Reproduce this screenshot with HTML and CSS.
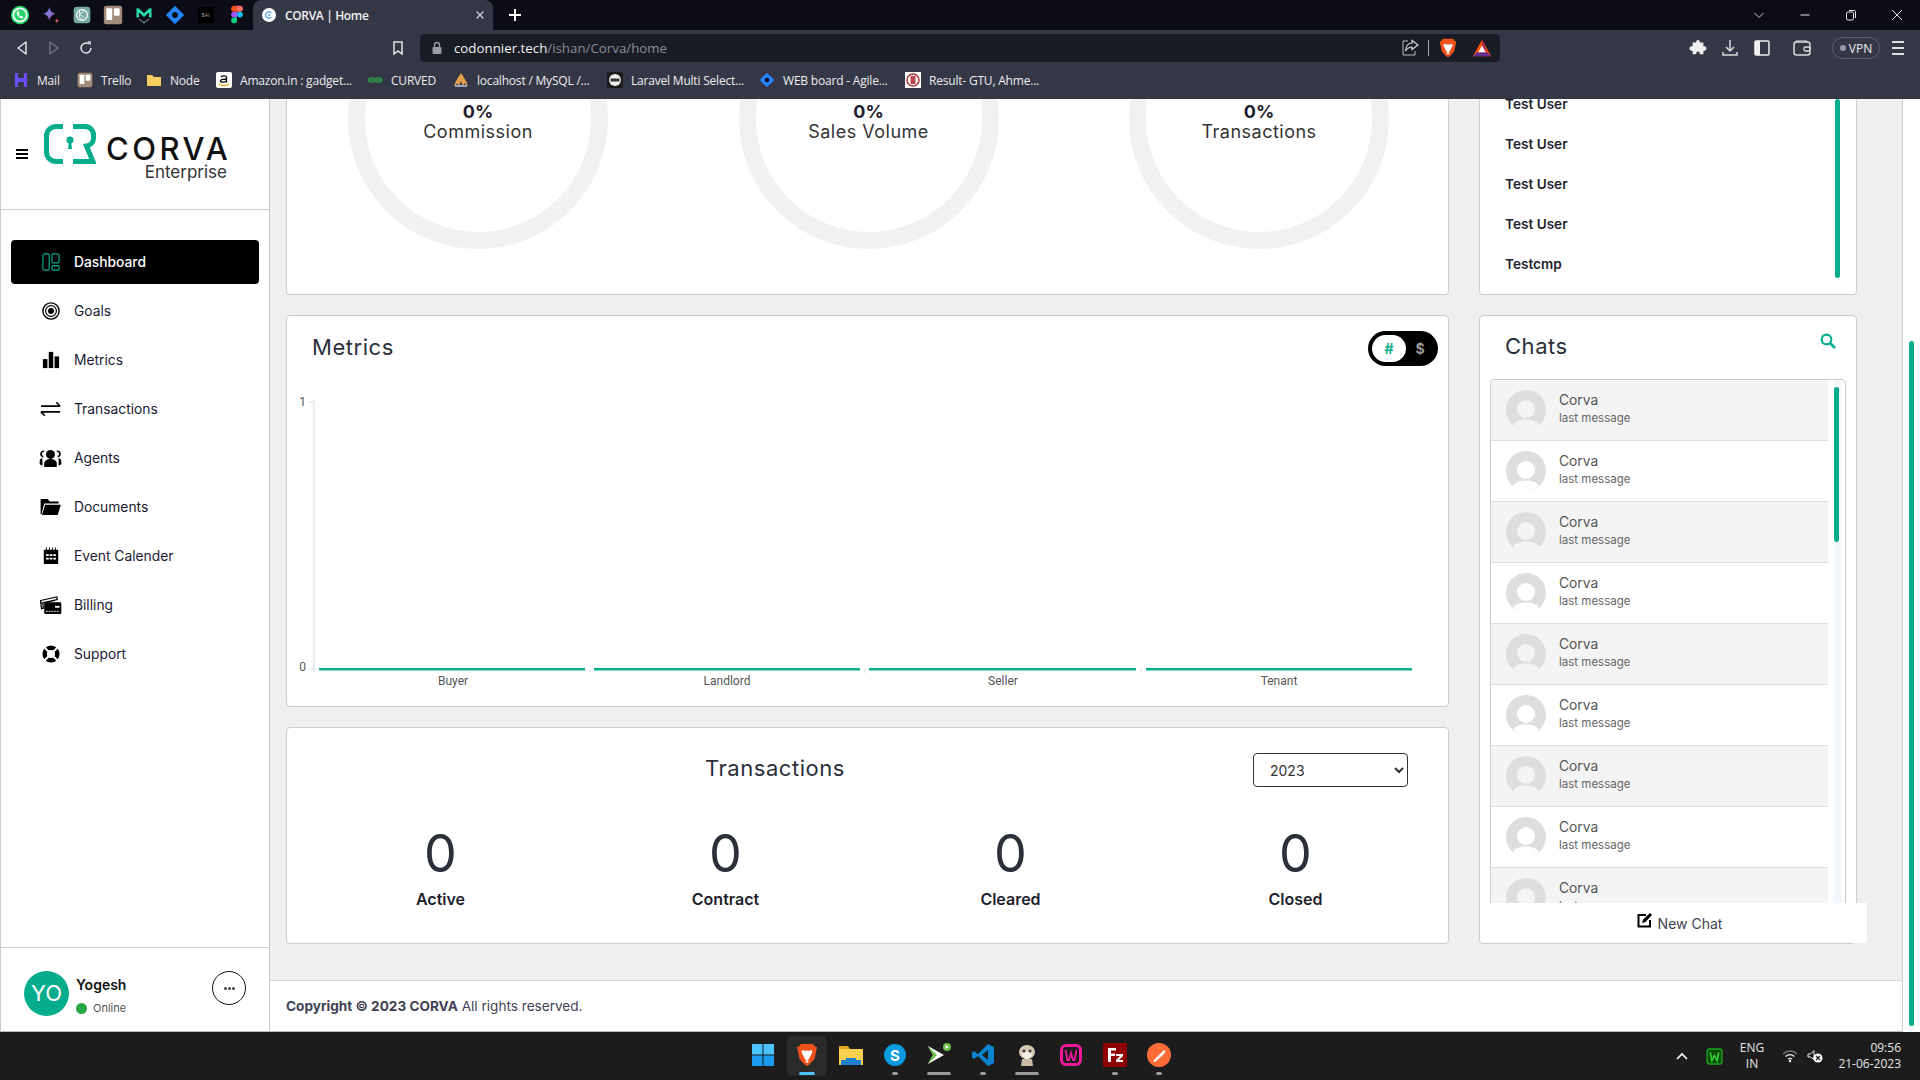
FILE: index.html
```html
<!DOCTYPE html>
<html>
<head>
	<meta charset="utf-8">
	<title>CORVA | Home</title>
	<link rel="stylesheet" href="styles.css">
</head>

<body>
	<svg class="defs" width="0" height="0">
		<symbol id="person" viewBox="0 0 40 40">
			<circle cx="20" cy="20" r="20" fill="#dedede"/>
			<circle cx="20" cy="19" r="9" fill="currentColor"/>
			<path d="M7 35c2-4 7-5.500 13-5.500s11 1.500 13 5.500c-3.500 3-8 5-13 5s-9.500-2-13-5z" fill="currentColor"/>
		</symbol>
		<symbol id="brave" viewBox="0 0 24 24">
			<path d="M6 1h12l2 2.500 2 .5-1 5-1.500 7-5 5.500L12 23l-2.500-1.500-5-5.500L3 9 2 4l2-.5z" fill="#f1511b"/>
			<path d="M7.500 7l3 1 1.500-.8 1.500.8 3-1 1 2-2.500 5-2 3.500h-2l-2-3.500-2.500-5z" fill="#fff"/>
			<path d="M9.800 18h4.400L12 20z" fill="#fff"/>
		</symbol>
		<symbol id="jira" viewBox="0 0 24 24">
			<path d="M12 1l11 11-11 11L1 12z" fill="#2684ff"/>
			<circle cx="12" cy="12" r="3.500" fill="#0b0c15"/>
		</symbol>
		<symbol id="trello" viewBox="0 0 24 24">
			<rect x="1" y="1" width="22" height="22" rx="3" fill="#a08a78"/>
			<rect x="4" y="4" width="7" height="14" rx="1" fill="#fff"/>
			<rect x="13" y="4" width="7" height="9" rx="1" fill="#fff"/>
		</symbol>
	</svg>

	<header class="browser">
		<div class="tabs">
			<span class="pin"><svg viewBox="0 0 24 24"><circle cx="12" cy="12" r="11" fill="#25d366"/><circle cx="12" cy="12" r="8" fill="none" stroke="#fff" stroke-width="2"/><path d="M9 7.500c-1.500 1-1.500 3 .5 5.500s4 3.500 5.500 3l1-1.500-2.200-1.500-1 .8c-1-.5-2-1.800-2.300-2.800l1-.8-1-2.700z" fill="#fff"/></svg></span>
			<span class="pin"><svg viewBox="0 0 24 24"><defs><linearGradient id="star" x1="0" y1="0" x2="1" y2="1"><stop offset="0" stop-color="#4b8cf5"/><stop offset="1" stop-color="#c65cb0"/></linearGradient></defs><path d="M10 2c.8 5 3 7.500 8 8.500-5 1-7.200 3.500-8 8.500-.8-5-3-7.500-8-8.500 5-1 7.200-3.500 8-8.500z" fill="url(#star)"/><path d="M19 16c.3 1.800 1 2.700 3 3-2 .3-2.700 1.200-3 3-.3-1.800-1-2.700-3-3 2-.3 2.700-1.200 3-3z" fill="#e0606f"/></svg></span>
			<span class="pin"><svg viewBox="0 0 24 24"><rect x="2" y="2" width="20" height="20" rx="4" fill="#74aa9c"/><circle cx="12" cy="12" r="6.500" fill="none" stroke="#fff" stroke-width="1.500"/><path d="M9 7v8l5 3M15 7l-6 4 6 4" fill="none" stroke="#fff"/></svg></span>
			<span class="pin"><svg viewBox="0 0 24 24"><use href="#trello"/></svg></span>
			<span class="pin"><svg viewBox="0 0 24 24"><path d="M3 15V4h2.500L12 10l6.500-6H21v11h-3V9l-6 5.500L6 9v6z" fill="#2bd9a5"/><path d="M6 17l6 4.500 6-4.500" fill="none" stroke="#59616f" stroke-width="2"/></svg></span>
			<span class="pin"><svg viewBox="0 0 24 24"><use href="#jira"/></svg></span>
			<span class="pin"><span class="bai">BAI</span></span>
			<span class="pin"><svg viewBox="0 0 24 24"><path d="M12 1H8.500a3.500 3.500 0 0 0 0 7H12z" fill="#f24e1e"/><path d="M12 1h3.500a3.500 3.500 0 0 1 0 7H12z" fill="#ff7262"/><path d="M12 8H8.500a3.500 3.500 0 0 0 0 7H12z" fill="#a259ff"/><circle cx="15.500" cy="11.500" r="3.500" fill="#1abcfe"/><path d="M8.500 15H12v3.500a3.500 3.500 0 1 1-3.500-3.500z" fill="#0acf83"/></svg></span>
			<div class="tab-active">
				<svg class="tab-icon" viewBox="0 0 24 24"><circle cx="12" cy="12" r="12" fill="#fff"/><path d="M16 8.500a5.500 5.500 0 1 0 0 7" fill="none" stroke="#6ba6e8" stroke-width="2.500"/><circle cx="12.500" cy="12" r="2" fill="#6ba6e8"/></svg>
				<span class="tab-title">CORVA | Home</span>
				<svg class="tab-close" viewBox="0 0 12 12"><path d="M2 2l8 8M10 2l-8 8" stroke="#e6e6e6" stroke-width="1.500"/></svg>
			</div>
			<svg class="tab-new" viewBox="0 0 14 14"><path d="M7 1v12M1 7h12" stroke="#fff" stroke-width="2"/></svg>
			<div class="window-btns">
				<span><svg viewBox="0 0 12 12"><path d="M1.500 4L6 8.500 10.500 4" fill="none" stroke="#c8c8c8"/></svg></span>
				<span><svg viewBox="0 0 12 12"><path d="M1.500 6h9" stroke="#e6e6e6"/></svg></span>
				<span><svg viewBox="0 0 12 12"><rect x="1.500" y="3" width="7" height="8" rx="1.500" fill="none" stroke="#e6e6e6"/><path d="M4 1.500h5.500a1 1 0 0 1 1 1V9" fill="none" stroke="#e6e6e6"/></svg></span>
				<span><svg viewBox="0 0 12 12"><path d="M1 1l10 10M11 1L1 11" stroke="#e6e6e6"/></svg></span>
			</div>
		</div>

		<div class="toolbar">
			<span class="nav-btn"><svg viewBox="0 0 16 16"><path d="M12 2L4 8l8 6z" fill="none" stroke="#e4e4e4" stroke-width="1.500" stroke-linejoin="round"/></svg></span>
			<span class="nav-btn"><svg viewBox="0 0 16 16"><path d="M4 2l8 6-8 6z" fill="none" stroke="#6d7180" stroke-width="1.500" stroke-linejoin="round"/></svg></span>
			<span class="nav-btn"><svg viewBox="0 0 16 16"><path d="M13 8a5 5 0 1 1-2-4" fill="none" stroke="#e4e4e4" stroke-width="1.500"/><path d="M9.500 1l3.500.5-.5 4z" fill="#e4e4e4"/></svg></span>
			<svg class="bookmark-btn" viewBox="0 0 16 16"><path d="M4 2h8v12l-4-3-4 3z" fill="none" stroke="#e4e4e4" stroke-width="1.500"/></svg>
			<div class="address">
				<svg class="lock" viewBox="0 0 14 14"><rect x="2.500" y="6" width="9" height="7" rx="1" fill="#9a9ca5"/><path d="M4.500 6V4a2.500 2.500 0 0 1 5 0v2" fill="none" stroke="#9a9ca5" stroke-width="1.300"/></svg>
				<span class="url">codonnier.tech<span class="url-path">/ishan/Corva/home</span></span>
				<div class="address-icons">
					<svg class="ai-share" viewBox="0 0 20 20"><path d="M8 3H3v14h12v-4" fill="none" stroke="#bbb"/><path d="M18 7l-6-4.500V5C8 5 6 8 5.500 13c2-3 4-4 6.500-4v2.500z" fill="none" stroke="#d8d8d8" stroke-width="1.200"/></svg>
					<span class="ai-sep"></span>
					<svg class="ai-icon" viewBox="0 0 24 24"><use href="#brave"/></svg>
					<svg class="ai-icon" viewBox="0 0 24 24"><path d="M12 2L1 22h22z" fill="#ff5000"/><path d="M1 22l5-5h12l5 5z" fill="#662d91"/><path d="M12 2v8l5 7 1 .5z" fill="#9e1f63"/><path d="M12 9l4.500 8h-9z" fill="#fff"/></svg>
				</div>
			</div>
			<svg class="tool tool-first" viewBox="0 0 20 20"><path d="M8 3a2 2 0 0 1 4 0v1h4v4h1a2 2 0 0 1 0 5h-1v4h-4v-1a2 2 0 0 0-4 0v1H4v-4H3a2 2 0 0 1 0-5h1V4h4z" fill="#f0f0f0" transform="translate(1 1) scale(.9)"/></svg>
			<svg class="tool" viewBox="0 0 20 20"><path d="M10 2v11M6 9l4 4 4-4" fill="none" stroke="#ddd" stroke-width="1.500"/><path d="M3 14v3h14v-3" fill="none" stroke="#ddd" stroke-width="1.500"/></svg>
			<svg class="tool" viewBox="0 0 20 20"><rect x="3" y="3" width="14" height="14" rx="1" fill="none" stroke="#f0f0f0" stroke-width="1.500"/><rect x="3" y="3" width="5" height="14" fill="#f0f0f0"/></svg>
			<svg class="tool tool-wide" viewBox="0 0 20 20"><rect x="2" y="4" width="16" height="13" rx="2.500" fill="none" stroke="#ddd" stroke-width="1.500"/><path d="M4 4V3h11v1" fill="none" stroke="#ddd"/><rect x="12" y="9" width="6" height="4" rx="1.500" fill="none" stroke="#ddd" stroke-width="1.300"/></svg>
			<span class="vpn"><i class="vpn-dot"></i>VPN</span>
			<svg class="tool tool-menu" viewBox="0 0 20 20"><path d="M4 4h12M4 10h12M4 16h12" stroke="#ddd" stroke-width="2"/></svg>
		</div>

		<div class="bookmarks">
			<span class="bm"><svg viewBox="0 0 16 16"><path d="M2 1h3v5h6V1h3v14h-3v-5H5v5H2z" fill="#6a4df5"/></svg>Mail</span>
			<span class="bm"><svg viewBox="0 0 24 24"><use href="#trello"/></svg>Trello</span>
			<span class="bm"><svg viewBox="0 0 16 16"><path d="M1 3h5l2 2h7v9H1z" fill="#f7cf5f"/></svg>Node</span>
			<span class="bm"><svg viewBox="0 0 16 16"><rect width="16" height="16" rx="2" fill="#fff"/><path d="M5 5c1-1.500 5-1.500 5.500 0v5.500M10.500 7C7 7 4.500 7.500 4.500 9s4 1.500 6 0" fill="none" stroke="#111" stroke-width="1.400"/><path d="M3 12c3 2 7 2 10 0" fill="none" stroke="#f90" stroke-width="1.300"/></svg>Amazon.in : gadget...</span>
			<span class="bm"><svg viewBox="0 0 16 16"><path d="M8 8c-1-3-6-3-7 0 1 3 6 3 7 0 1-3 6-3 7 0-1 3-6 3-7 0zM1 8h14" fill="none" stroke="#2f8d46" stroke-width="1.300"/></svg>CURVED</span>
			<span class="bm"><svg viewBox="0 0 16 16"><path d="M8 1c-2 3-5 7-7 13 2-1 3-2 4-3 0 1 0 2 1 3l2-5 2 5c1-1 1-2 1-3 1 1 2 2 4 3-2-6-5-10-7-13z" fill="#e9a04a"/><path d="M2 13h12v2H2z" fill="#9aa5c4"/></svg>localhost / MySQL /...</span>
			<span class="bm"><svg viewBox="0 0 16 16"><rect width="16" height="16" rx="2" fill="#1b1b1b"/><circle cx="8" cy="8" r="6" fill="#eee"/><rect x="3.500" y="6.500" width="9" height="3" fill="#333"/></svg>Laravel Multi Select...</span>
			<span class="bm"><svg viewBox="0 0 24 24"><use href="#jira"/></svg>WEB board - Agile...</span>
			<span class="bm"><svg viewBox="0 0 16 16"><rect width="16" height="16" fill="#fff"/><circle cx="8" cy="8" r="6" fill="none" stroke="#a33" stroke-width="1.500"/><rect x="5.500" y="4" width="5" height="8" fill="#b45"/></svg>Result- GTU, Ahme...</span>
		</div>
	</header>

	<div class="app">
		<aside class="sidebar">
			<div class="brand">
				<svg class="hamburger" viewBox="0 0 12 10"><path d="M0 1h12M0 5h12M0 9h12" stroke="#000" stroke-width="2"/></svg>
				<svg class="logo-mark" viewBox="0 0 52 40"><path d="M19 2.500h-7A9.500 9.500 0 0 0 2.500 12v16a9.500 9.500 0 0 0 9.500 9.500h7M29 2.500h12a8.500 8.500 0 0 1 8.500 8.500v3a8 8 0 0 1-7 8l6.500 15.500H29" fill="none" stroke="#06ad8c" stroke-width="5"/><circle cx="26" cy="16" r="3.500" fill="#06ad8c"/><path d="M25 17h2l1 8h-4z" fill="#06ad8c"/></svg>
				<div class="logo-text">
					<div class="logo-name">CORVA</div>
					<div class="logo-sub">Enterprise</div>
				</div>
			</div>

			<nav class="menu">
				<a class="menu-item active"><svg viewBox="0 0 20 20"><rect x="1" y="1" width="7" height="18" rx="1.500" fill="none" stroke="#06ad8c" stroke-width="1.300"/><rect x="11" y="1" width="8" height="10" rx="1.500" fill="none" stroke="#06ad8c" stroke-width="1.300"/><rect x="11" y="14" width="8" height="5" rx="1.500" fill="none" stroke="#06ad8c" stroke-width="1.300"/></svg>Dashboard</a>
				<a class="menu-item"><svg viewBox="0 0 20 20"><circle cx="10" cy="10" r="9" fill="none" stroke="#000" stroke-width="1.600"/><circle cx="10" cy="10" r="6" fill="none" stroke="#000" stroke-width="1.300"/><circle cx="10" cy="10" r="3.300" fill="#000"/></svg>Goals</a>
				<a class="menu-item"><svg viewBox="0 0 20 20"><rect x="1" y="9" width="5" height="10" fill="#000"/><rect x="7.500" y="1" width="5" height="18" fill="#000"/><rect x="14" y="6" width="5" height="13" fill="#000"/></svg>Metrics</a>
				<a class="menu-item"><svg class="wide" viewBox="0 0 24 16"><path d="M2 5h20M18 1l4 4M2 11h20M6 15l-4-4" fill="none" stroke="#000" stroke-width="1.700"/></svg>Transactions</a>
				<a class="menu-item"><svg class="wide" viewBox="0 0 24 20"><circle cx="12" cy="6" r="5" fill="#000"/><path d="M5 20v-4c0-3 3-5 7-5s7 2 7 5v4z" fill="#000"/><path d="M5 2.500a3 3 0 0 0-1 6M19 2.500a3 3 0 0 1 1 6" fill="none" stroke="#000" stroke-width="1.800"/><path d="M3 10c-2 .5-3 2-3 4v3l3 1.500zM21 10c2 .5 3 2 3 4v3l-3 1.500z" fill="#000"/></svg>Agents</a>
				<a class="menu-item"><svg class="wide" viewBox="0 0 24 20"><path d="M1 1h8l2 3h10v2H5L2 18H1z" fill="#000"/><path d="M6 7.500h17.500L20 19H2.500z" fill="#000"/></svg>Documents</a>
				<a class="menu-item"><svg viewBox="0 0 20 20"><rect x="2" y="3" width="16" height="16" rx="1" fill="#000"/><path d="M5 0.500v4M8.300 0.500v4M11.700 0.500v4M15 0.500v4" stroke="#000"/><path d="M4.500 8h3v2h-3zM8.500 8h3v2h-3zM12.500 8h3v2h-3zM4.500 12h3v2h-3zM8.500 12h3v2h-3zM12.500 12h3v2h-3z" fill="#fff"/></svg>Event Calender</a>
				<a class="menu-item"><svg class="wide" viewBox="0 0 24 20"><path d="M1 5l18-4 .5 3-16 3.500.5 6-2 .5zM2 8l15-3" fill="none" stroke="#000" stroke-width="1.400"/><rect x="5" y="7" width="19" height="13" rx="1.500" fill="#000"/><path d="M17 11h5v2h-5z" fill="#fff"/><path d="M7 17h14" stroke="#fff" stroke-dasharray="2 1"/></svg>Billing</a>
				<a class="menu-item"><svg viewBox="0 0 20 20"><circle cx="10" cy="10" r="9.500" fill="#000"/><path d="M3 3l14 14M17 3L3 17" stroke="#fff" stroke-width="2.200"/><circle cx="10" cy="10" r="4.500" fill="#fff"/></svg>Support</a>
			</nav>

			<div class="profile">
				<div class="profile-pic">YO</div>
				<div class="profile-info">
					<div class="profile-name">Yogesh</div>
					<div class="profile-status"><i class="status-dot"></i>Online</div>
				</div>
				<button class="profile-more"><i></i><i></i><i></i></button>
			</div>
		</aside>

		<main class="main">
			<div class="content">
				<section class="card gauges">
					<div class="gauge"><b>0%</b><span>Commission</span></div>
					<div class="gauge"><b>0%</b><span>Sales Volume</span></div>
					<div class="gauge"><b>0%</b><span>Transactions</span></div>
				</section>

				<section class="card users">
					<ul class="user-list">
						<li>Test User</li>
						<li>Test User</li>
						<li>Test User</li>
						<li>Test User</li>
						<li>Testcmp</li>
					</ul>
					<div class="user-thumb"></div>
				</section>

				<section class="card metrics">
					<div class="metrics-head">
						<h2 class="card-title">Metrics</h2>
						<div class="toggle">
							<span class="toggle-on">#</span>
							<span class="toggle-off">$</span>
						</div>
					</div>
					<svg class="chart" width="1161" height="300" viewBox="0 0 1161 300">
						<path d="M27 4v273M22 6h5M22 273h5M303 273v4M578 273v4M854 273v4" stroke="#ddd" fill="none"/>
						<g fill="#06ad8c">
							<rect x="32" y="272" width="266" height="2.500"/>
							<rect x="307" y="272" width="266" height="2.500"/>
							<rect x="582" y="272" width="267" height="2.500"/>
							<rect x="859" y="272" width="266" height="2.500"/>
						</g>
						<text x="19" y="10" class="tick" text-anchor="end">1</text>
						<text x="19" y="275" class="tick" text-anchor="end">0</text>
						<text x="166" y="289" class="tick" text-anchor="middle">Buyer</text>
						<text x="440" y="289" class="tick" text-anchor="middle">Landlord</text>
						<text x="716" y="289" class="tick" text-anchor="middle">Seller</text>
						<text x="992" y="289" class="tick" text-anchor="middle">Tenant</text>
					</svg>
				</section>

				<section class="card chats">
					<div class="chats-head">
						<h2 class="card-title">Chats</h2>
						<svg class="chats-search" viewBox="0 0 16 16"><circle cx="6.500" cy="6.500" r="4.800" fill="none" stroke="#06ad8c" stroke-width="2.200"/><path d="M10 10l5 5" stroke="#06ad8c" stroke-width="2.600"/></svg>
					</div>
					<div class="chat-box">
						<div class="chat-rows">
							<div class="chat-row"><svg class="chat-pic"><use href="#person"/></svg><div><div class="chat-name">Corva</div><div class="chat-msg">last message</div></div></div>
							<div class="chat-row"><svg class="chat-pic"><use href="#person"/></svg><div><div class="chat-name">Corva</div><div class="chat-msg">last message</div></div></div>
							<div class="chat-row"><svg class="chat-pic"><use href="#person"/></svg><div><div class="chat-name">Corva</div><div class="chat-msg">last message</div></div></div>
							<div class="chat-row"><svg class="chat-pic"><use href="#person"/></svg><div><div class="chat-name">Corva</div><div class="chat-msg">last message</div></div></div>
							<div class="chat-row"><svg class="chat-pic"><use href="#person"/></svg><div><div class="chat-name">Corva</div><div class="chat-msg">last message</div></div></div>
							<div class="chat-row"><svg class="chat-pic"><use href="#person"/></svg><div><div class="chat-name">Corva</div><div class="chat-msg">last message</div></div></div>
							<div class="chat-row"><svg class="chat-pic"><use href="#person"/></svg><div><div class="chat-name">Corva</div><div class="chat-msg">last message</div></div></div>
							<div class="chat-row"><svg class="chat-pic"><use href="#person"/></svg><div><div class="chat-name">Corva</div><div class="chat-msg">last message</div></div></div>
							<div class="chat-row"><svg class="chat-pic"><use href="#person"/></svg><div><div class="chat-name">Corva</div><div class="chat-msg">last message</div></div></div>
						</div>
						<div class="chat-track"><div class="chat-thumb"></div></div>
					</div>
					<div class="new-chat">
						<svg viewBox="0 0 16 16"><path d="M9 3H1.500v11.500H13V8" fill="none" stroke="#000" stroke-width="2"/><path d="M5 11l1-3.500L13 1l2 2-6.500 7z" fill="#000"/></svg>
						New Chat
					</div>
				</section>

				<section class="card transactions">
					<div class="tx-head">
						<h2 class="card-title tx-title">Transactions</h2>
						<select class="tx-year"><option>2023</option></select>
					</div>
					<div class="tx-stats">
						<div class="tx-stat"><div class="tx-num">0</div><div class="tx-label">Active</div></div>
						<div class="tx-stat"><div class="tx-num">0</div><div class="tx-label">Contract</div></div>
						<div class="tx-stat"><div class="tx-num">0</div><div class="tx-label">Cleared</div></div>
						<div class="tx-stat"><div class="tx-num">0</div><div class="tx-label">Closed</div></div>
					</div>
				</section>
			</div>

			<footer class="page-footer"><b>Copyright © 2023 CORVA</b> All rights reserved.</footer>
		</main>

		<div class="page-scroll"><div class="page-thumb"></div></div>
	</div>

	<footer class="taskbar">
		<div class="task-icons">
			<span class="task"><svg viewBox="0 0 24 24"><g fill="#4cc2ff"><rect x="1" y="1" width="10.500" height="10.500"/><rect x="12.500" y="1" width="10.500" height="10.500"/></g><g fill="#1a9bf0"><rect x="1" y="12.500" width="10.500" height="10.500"/><rect x="12.500" y="12.500" width="10.500" height="10.500"/></g></svg></span>
			<span class="task task-open"><svg viewBox="0 0 24 24"><use href="#brave"/></svg><i class="mark mark-blue"></i></span>
			<span class="task"><svg viewBox="0 0 24 24"><path d="M0 3h9l2 3H0z" fill="#e6a817"/><rect y="6" width="24" height="16" fill="#fbd04e"/><path d="M7 15h10v2h5v5H2v-5h5z" fill="#1f7fd1"/></svg></span>
			<span class="task"><svg viewBox="0 0 24 24"><circle cx="12" cy="12" r="11" fill="#0a9ae0"/><text x="12" y="17.500" class="task-s">S</text></svg><i class="mark"></i></span>
			<span class="task"><svg viewBox="0 0 24 24"><path d="M1 3l16 9-16 9 5-9z" fill="#fff"/><path d="M1 3l9 9H6z" fill="#6cc04a"/><path d="M1 21l9-9H6z" fill="#6cc04a"/><circle cx="20" cy="4" r="4" fill="#6cc04a"/><path d="M18.500 2l3.500 2-3.500 2z" fill="#fff"/></svg><i class="mark mark-long"></i></span>
			<span class="task"><svg viewBox="0 0 24 24"><path d="M17 1l6 3v16l-6 3L7 13l-4 3-2-1.500V9.500L3 8l4 3zM17 7l-6 5 6 5z" fill="#0a84d0"/></svg><i class="mark"></i></span>
			<span class="task"><svg viewBox="0 0 24 24"><ellipse cx="12" cy="9" rx="8" ry="7" fill="#d6c8b4"/><ellipse cx="12" cy="12" rx="5" ry="4" fill="#f3efe8"/><circle cx="9" cy="8" r="1.500" fill="#333"/><circle cx="15" cy="8" r="1.500" fill="#333"/><path d="M7 16h10l1 7H6z" fill="#cbbba5"/></svg><i class="mark mark-long"></i></span>
			<span class="task"><svg viewBox="0 0 24 24"><rect x="1" y="1" width="22" height="22" rx="6" fill="#f0189a"/><rect x="4" y="4" width="16" height="16" rx="3" fill="#1c1c1c"/><path d="M6.500 7l2 10h1.500L12 10l2 7h1.500l2-10" fill="none" stroke="#f0189a" stroke-width="1.800"/></svg></span>
			<span class="task"><svg viewBox="0 0 24 24"><rect width="24" height="24" fill="#8f0000"/><path d="M5 19V5h8v2.500H8v3h4V13H8v6z" fill="#fff"/><path d="M13 11h7v2l-4 4h4v2h-7v-2l4-4h-4z" fill="#fff"/></svg><i class="mark"></i></span>
			<span class="task"><svg viewBox="0 0 24 24"><circle cx="12" cy="12" r="12" fill="#ff6c37"/><path d="M6 18l8-8 2 2-8 7zM14 10l3-3 1.500 1.500-2.500 3.500z" fill="#fff"/></svg><i class="mark"></i></span>
		</div>
		<div class="tray">
			<svg class="tray-up" viewBox="0 0 12 8"><path d="M1 7l5-5 5 5" fill="none" stroke="#fff" stroke-width="1.600"/></svg>
			<svg class="tray-wamp" viewBox="0 0 16 16"><rect x="1" y="1" width="14" height="14" rx="2" fill="#0a4d0a" stroke="#1fa51f" stroke-width="1.300"/><path d="M4 4l1.500 8L8 7l2.500 5L12 4" fill="none" stroke="#2fd12f" stroke-width="1.500"/></svg>
			<div class="tray-lang">ENG<br>IN</div>
			<svg class="tray-wifi" viewBox="0 0 16 14"><path d="M1 5c4-4 10-4 14 0" fill="none" stroke="#777" stroke-width="1.300"/><path d="M3.500 7.500c3-2.500 6-2.500 9 0M6 10c1.500-1 2.500-1 4 0" fill="none" stroke="#eee" stroke-width="1.300"/><circle cx="8" cy="12" r="1.200" fill="#fff"/></svg>
			<svg class="tray-sound" viewBox="0 0 16 14"><path d="M1 5h2.500L7 1.500v9L3.500 8H1z" fill="none" stroke="#eee"/><circle cx="11" cy="9" r="4.500" fill="#fff"/><path d="M9 7l4 4M13 7l-4 4" stroke="#1c1c1c" stroke-width="1.200"/></svg>
			<div class="tray-clock">09:56<br>21-06-2023</div>
		</div>
	</footer>
</body>
</html>
```

FILE: styles.css
```css
* {
	box-sizing: border-box;
}

body, html {
	height: 100%;
	margin: 0;
	padding: 0;
}

body {
	display: flex;
	flex-direction: column;
	overflow: hidden;
	background: #efefef;
	font-family: Inter, "Noto Sans", sans-serif;
	color: #1e1e2d;
}

.defs {
	display: block;
	height: 0;
}

/* browser chrome */

.browser {
	flex: none;
	height: 99px;
	font-family: "Open Sans", sans-serif;
	color: #eee;
	background: #343746;
}

.tabs {
	display: flex;
	align-items: center;
	height: 30px;
	padding-left: 4px;
	background: #0b0c15;
}

.pin {
	display: flex;
	align-items: center;
	justify-content: center;
	width: 31px;
	height: 30px;
}

.pin svg {
	width: 20px;
	height: 20px;
}

.bai {
	display: block;
	width: 16px;
	height: 16px;
	background: #000;
	color: #aaa;
	font-size: 5px;
	line-height: 16px;
	text-align: center;
}

.tab-active {
	display: flex;
	align-items: center;
	width: 240px;
	height: 30px;
	margin-left: 1px;
	padding: 0 6px 0 9px;
	background: #343746;
	border-radius: 8px 8px 0 0;
}

.tab-icon {
	width: 14px;
	height: 14px;
}

.tab-title {
	flex: 1;
	margin-left: 9px;
	font-size: 12px;
	font-weight: 600;
	letter-spacing: -0.35px;
	color: #f2f2f2;
}

.tab-close {
	width: 10px;
	height: 10px;
	margin-right: 2px;
}

.tab-new {
	width: 14px;
	height: 14px;
	margin-left: 15px;
}

.window-btns {
	display: flex;
	margin-left: auto;
}

.window-btns span {
	display: flex;
	align-items: center;
	justify-content: center;
	width: 46px;
	height: 30px;
}

.window-btns svg {
	width: 12px;
	height: 12px;
}

.toolbar {
	display: flex;
	align-items: center;
	height: 34px;
	padding: 2px 0 0 6px;
}

.nav-btn {
	display: flex;
	justify-content: center;
	width: 32px;
}

.nav-btn svg {
	width: 16px;
	height: 16px;
}

.bookmark-btn {
	width: 16px;
	height: 16px;
	margin-left: 288px;
}

.address {
	display: flex;
	align-items: center;
	width: 1080px;
	height: 28px;
	margin-left: 14px;
	padding: 0 8px 0 10px;
	background: #191c24;
	border-radius: 4px;
}

.lock {
	width: 14px;
	height: 14px;
}

.url {
	margin-left: 10px;
	font-size: 13.3px;
	color: #f2f2f2;
}

.url-path {
	color: #8b8e98;
}

.address-icons {
	display: flex;
	align-items: center;
	margin-left: auto;
}

.ai-share {
	width: 20px;
	height: 20px;
}

.ai-sep {
	width: 1px;
	height: 16px;
	margin: 0 9px 0 8px;
	background: #aaa;
}

.ai-icon {
	width: 20px;
	height: 20px;
	margin-right: 14px;
}

.ai-icon:last-child {
	margin-right: 0;
}

.tool {
	width: 20px;
	height: 20px;
	margin-left: 12px;
}

.tool-first {
	margin-left: 188px;
}

.tool-wide {
	margin-left: 20px;
}

.tool-menu {
	margin-left: 8px;
}

.vpn {
	display: flex;
	align-items: center;
	justify-content: center;
	width: 48px;
	height: 22px;
	margin-left: 20px;
	border: 1px solid #5c6070;
	border-radius: 11px;
	font-size: 12px;
}

.vpn-dot {
	width: 6px;
	height: 6px;
	margin-right: 3px;
	background: #9a9ca5;
	border-radius: 50%;
}

.bookmarks {
	display: grid;
	grid-template-columns: 64px 69px 70px 151px 86px 154px 152px 146px auto;
	align-items: center;
	height: 35px;
	padding: 0 0 3px 13px;
}

.bm {
	display: flex;
	align-items: center;
	gap: 8px;
	font-size: 12px;
	letter-spacing: -0.2px;
	white-space: nowrap;
}

.bm svg {
	flex: none;
	width: 16px;
	height: 16px;
}

/* page */

.app {
	display: flex;
	flex: 1;
	min-height: 0;
}

.sidebar {
	display: flex;
	flex: none;
	flex-direction: column;
	width: 270px;
	background: #fff;
	border-left: 1px solid #ccc;
	border-right: 1px solid #ccc;
	border-bottom: 1px solid #bbb;
}

.brand {
	display: flex;
	align-items: center;
	flex: none;
	height: 111px;
	padding-left: 15px;
	border-bottom: 1px solid #ccc;
}

.hamburger {
	width: 12px;
	height: 10px;
}

.logo-mark {
	width: 52px;
	height: 40px;
	margin: -20px 0 0 16px;
}

.logo-text {
	width: 121px;
	margin: 10px 0 0 10px;
	text-align: right;
}

.logo-name {
	font-size: 31px;
	font-weight: 500;
	line-height: 26px;
	letter-spacing: 3.5px;
	margin-right: -3px;
	color: #111;
	white-space: nowrap;
}

.logo-sub {
	font-size: 17px;
	line-height: 20px;
	color: #333;
}

.menu {
	display: flex;
	flex: 1;
	flex-direction: column;
	gap: 5px;
	padding: 30px 10px 0;
}

.menu-item {
	display: flex;
	align-items: center;
	height: 44px;
	padding: 0 0 1px 31px;
	font-size: 13.8px;
	color: #1a1a33;
	border-radius: 4px;
}

.menu-item svg {
	flex: none;
	width: 18px;
	height: 18px;
	margin-right: 14px;
}

.menu-item svg.wide {
	width: 23px;
	margin: 0 12px 0 -3px;
}

.menu-item.active {
	background: #000;
	color: #fff;
	font-weight: 500;
}

.profile {
	display: flex;
	align-items: flex-start;
	flex: none;
	height: 84px;
	padding: 23px 0 0 23px;
	border-top: 1px solid #ccc;
}

.profile-pic {
	width: 45px;
	height: 45px;
	background: #06ad8c;
	border-radius: 50%;
	color: #fff;
	font-size: 22px;
	line-height: 45px;
	text-align: center;
}

.profile-info {
	width: 136px;
	margin-left: 7px;
}

.profile-name {
	margin-top: 5px;
	font-size: 14px;
	font-weight: 600;
	line-height: 18px;
	color: #111;
}

.profile-status {
	display: flex;
	align-items: center;
	margin-top: 7px;
	font-size: 11px;
	color: #555;
}

.status-dot {
	width: 11px;
	height: 11px;
	margin-right: 6px;
	background: #28a745;
	border-radius: 50%;
}

.profile-more {
	display: flex;
	align-items: center;
	justify-content: center;
	gap: 1px;
	width: 34px;
	height: 34px;
	padding: 0;
	background: #fff;
	border: 1.5px solid #111;
	border-radius: 50%;
}

.profile-more i {
	width: 3px;
	height: 3px;
	background: #444;
	border-radius: 50%;
}

.main {
	display: flex;
	flex: none;
	flex-direction: column;
	width: 1633px;
	border-right: 1px solid #ccc;
}

.content {
	display: grid;
	flex: 1;
	grid-template-columns: 1163px 378px;
	grid-template-rows: 196px 392px 217px;
	gap: 20px 30px;
	padding-left: 16px;
}

.card {
	position: relative;
	background: #fff;
	border: 1px solid #ccc;
	border-radius: 4px;
}

.card-title {
	margin: 0;
	font-size: 22px;
	font-weight: 400;
	line-height: 32px;
	letter-spacing: 0.55px;
	color: #2b2f3a;
}

/* this row is scrolled, so its top runs under the browser bar */
.gauges {
	display: flex;
	justify-content: center;
	gap: 130.5px;
	overflow: hidden;
	padding-left: 2px;
	border-top: 0;
	border-radius: 0 0 4px 4px;
}

.gauge {
	display: flex;
	flex: none;
	flex-direction: column;
	align-items: center;
	justify-content: center;
	width: 260px;
	height: 260px;
	margin-top: -110px;
	padding-top: 5px;
	border: 17px solid #f1f1f1;
	border-radius: 50%;
}

.gauge b {
	font-size: 18px;
	line-height: 20px;
	font-weight: 700;
}

.gauge span {
	font-size: 18px;
	line-height: 20px;
	letter-spacing: 0.5px;
	color: #333;
}

.users {
	display: flex;
	overflow: hidden;
	border-top: 0;
	border-radius: 0 0 4px 4px;
}

.user-list {
	flex: 1;
	margin: -15px 0 0;
	padding: 0 0 0 25px;
	list-style: none;
}

.user-list li {
	height: 40px;
	font-size: 13.6px;
	font-weight: 600;
	line-height: 40px;
}

.user-thumb {
	flex: none;
	width: 5px;
	height: 179px;
	margin-right: 16px;
	background: #06ad8c;
	border-radius: 3px;
}

.metrics-head {
	display: flex;
	align-items: flex-start;
	justify-content: space-between;
	height: 80px;
	padding: 15px 10px 0 25px;
}

.toggle {
	display: flex;
	align-items: center;
	width: 70px;
	height: 35px;
	padding: 0 4px;
	background: #000;
	border-radius: 18px;
	font-size: 14px;
	font-weight: 700;
}

.toggle-on {
	width: 34px;
	height: 27px;
	background: #fff;
	border-radius: 14px;
	color: #06ad8c;
	line-height: 27px;
	text-align: center;
}

.toggle-off {
	flex: 1;
	color: #9a9a9a;
	text-align: center;
}

.chart {
	display: block;
}

.tick {
	font-family: Roboto, sans-serif;
	font-size: 12px;
	fill: #555;
}

.chats {
	grid-column: 2;
	grid-row: 2 / span 2;
}

.chats-head {
	display: flex;
	justify-content: space-between;
	height: 63px;
	padding: 14px 20px 0 25px;
}

.chats-search {
	width: 16px;
	height: 16px;
	margin-top: 3px;
}

.chat-box {
	display: flex;
	height: 554px;
	margin: 0 10px;
	overflow: hidden;
	border: 1px solid #ccc;
	border-radius: 4px;
}

.chat-rows {
	width: 337px;
}

.chat-row {
	display: flex;
	align-items: center;
	height: 61px;
	padding-left: 15px;
	background: #fff;
	border-bottom: 1px solid #ddd;
	color: #fff;
}

.chat-row:nth-child(odd) {
	background: #f4f4f4;
	color: #f4f4f4;
}

.chat-pic {
	flex: none;
	width: 40px;
	height: 40px;
	margin-right: 13px;
}

.chat-name {
	margin-top: -4px;
	font-size: 13.8px;
	line-height: 20px;
	color: #555;
}

.chat-msg {
	font-size: 11.5px;
	line-height: 16px;
	color: #666;
}

.chat-track {
	flex: none;
	width: 8px;
	margin-left: 6px;
	padding-top: 7px;
	background: #f5f8fa;
}

.chat-thumb {
	width: 5px;
	height: 155px;
	background: #06ad8c;
	border-radius: 3px;
}

/* sits over the bottom of the chat list and past the card edge */
.new-chat {
	position: absolute;
	top: 587px;
	right: -11px;
	bottom: 0;
	left: 10px;
	display: flex;
	align-items: center;
	justify-content: center;
	gap: 5px;
	background: #fff;
	font-size: 14px;
	color: #3f4254;
}

.new-chat svg {
	width: 16px;
	height: 16px;
	margin: -6px 0 0 2px;
}

.transactions {
	grid-column: 1;
	grid-row: 3;
}

.tx-head {
	display: flex;
	align-items: center;
	padding-top: 25px;
}

.tx-title {
	width: 966px;
	margin-top: -4px;
	padding-left: 10px;
	text-align: center;
}

.tx-year {
	width: 155px;
	height: 34px;
	padding-left: 12px;
	background: #fff;
	border: 1px solid #333;
	border-radius: 4px;
	font-family: Inter, sans-serif;
	font-size: 14px;
	color: #333;
}

.tx-stats {
	display: grid;
	grid-template-columns: repeat(4, 285px);
	margin-top: 41px;
	padding-left: 11px;
}

.tx-stat {
	text-align: center;
}

.tx-num {
	font-size: 52px;
	line-height: 52px;
	color: #2b2f3a;
}

.tx-label {
	margin-top: 8px;
	font-size: 16px;
	font-weight: 600;
	line-height: 22px;
}

.page-footer {
	flex: none;
	height: 52px;
	padding-left: 16px;
	background: #fff;
	border-top: 1px solid #d3d6dd;
	border-bottom: 1px solid #bbb;
	font-size: 13.6px;
	line-height: 50px;
	color: #3f4254;
}

.page-scroll {
	flex: 1;
	padding-left: 6px;
	background: #fff;
}

.page-thumb {
	width: 5px;
	height: 100%;
	padding-top: 242px;
	background: #f5f8fa;
	background-clip: content-box;
}

.page-thumb:after {
	content: "";
	display: block;
	height: 685px;
	background: #06ad8c;
	border-radius: 3px;
}

/* windows taskbar */

.taskbar {
	display: flex;
	flex: none;
	height: 48px;
	background: #1c1c1c;
}

.task-icons {
	display: flex;
	padding-left: 741px;
}

.task {
	position: relative;
	display: flex;
	align-items: center;
	justify-content: center;
	width: 44px;
	height: 48px;
	padding-bottom: 2px;
}

.task svg {
	width: 24px;
	height: 24px;
}

.task-open:before {
	content: "";
	position: absolute;
	top: 4px;
	left: 2px;
	width: 40px;
	height: 40px;
	background: #2a2a2a;
	border-radius: 4px;
}

.task-open svg {
	position: relative;
}

.task-s {
	font-size: 15px;
	font-weight: 700;
	text-anchor: middle;
	fill: #fff;
}

.mark {
	position: absolute;
	left: 19px;
	bottom: 5px;
	width: 6px;
	height: 3px;
	background: #999;
	border-radius: 2px;
}

.mark-long {
	left: 10px;
	width: 24px;
}

.mark-blue {
	left: 14px;
	width: 16px;
	background: #4cc2ff;
}

.tray {
	display: flex;
	align-items: center;
	flex: 1;
	padding-right: 19px;
	font-family: "Open Sans", sans-serif;
	font-size: 12px;
	line-height: 16px;
	color: #e6e6e6;
}

.tray-up {
	width: 12px;
	height: 8px;
	margin-left: 495px;
}

.tray-wamp {
	width: 17px;
	height: 17px;
	margin-left: 18px;
}

.tray-lang {
	width: 40px;
	margin-left: 9px;
	text-align: center;
}

.tray-wifi {
	width: 16px;
	height: 14px;
	margin-left: 10px;
}

.tray-sound {
	width: 16px;
	height: 14px;
	margin-left: 9px;
}

.tray-clock {
	margin-left: auto;
	text-align: right;
}
```
